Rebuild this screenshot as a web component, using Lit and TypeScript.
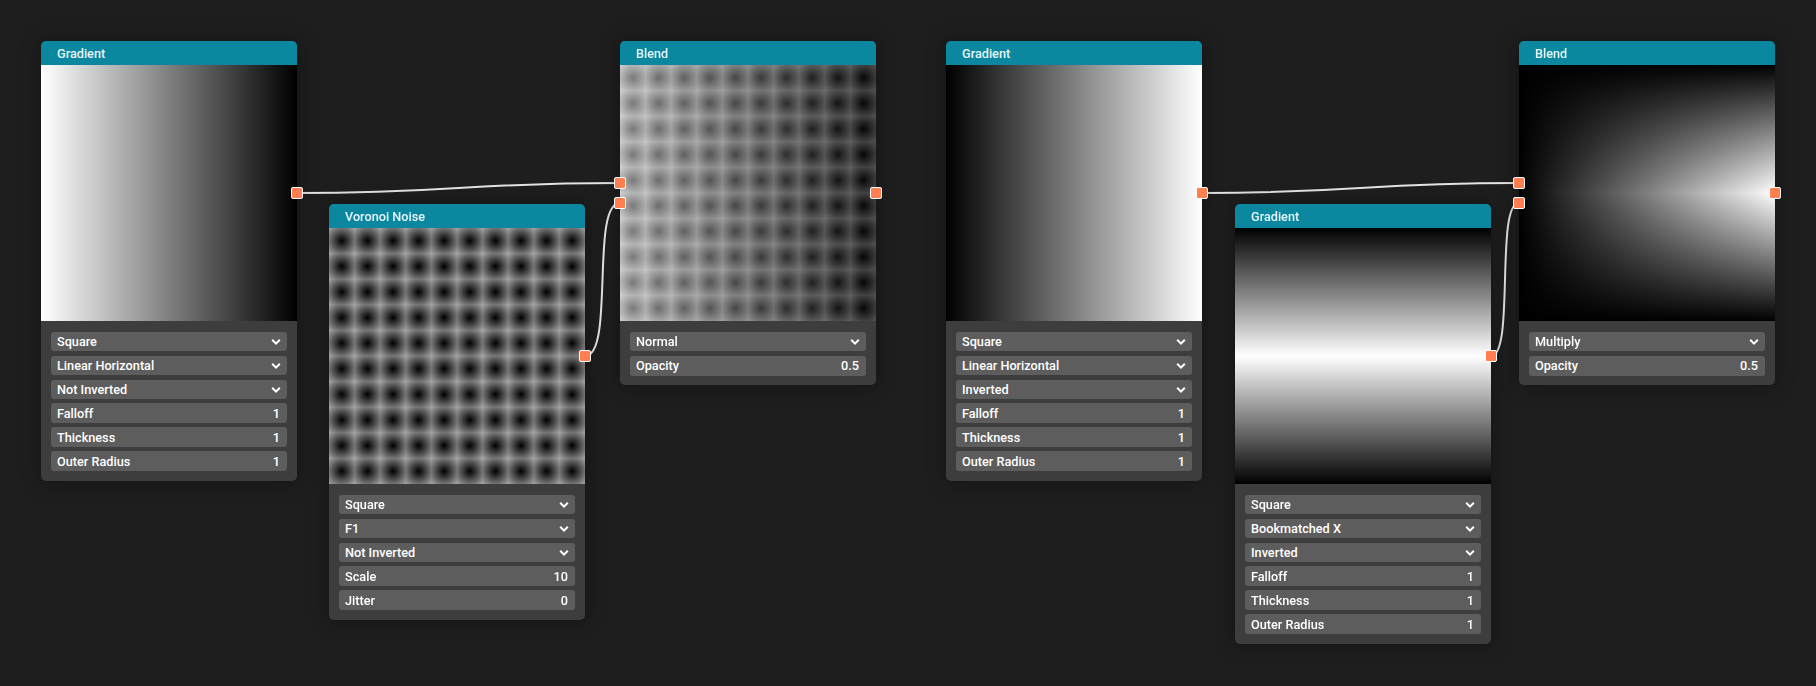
import { LitElement, html, css, svg } from "lit";
import { customElement, property } from "lit/decorators.js";

type Shade = (u: number, v: number) => number;
type Control = { label: string; value?: string };
type NodeData = {
  title: string;
  x: number;
  y: number;
  shade: Shade;
  controls: Control[];
  inputs?: number[];
};

const SIZE = 256;
const gradH: Shade = (u) => 1 - u;
const gradHInv: Shade = (u) => u;
const bookmark: Shade = (_, v) => 1 - Math.abs(2 * v - 1);
const voronoi: Shade = (u, v) => {
  const fx = (u * 10) % 1;
  const fy = (v * 10) % 1;
  const d = Math.hypot(fx - 0.5, fy - 0.5);
  return Math.min(1, d * 0.92);
};
const blendNormal: Shade = (u, v) => gradH(u, v) * 0.5 + voronoi(u, v) * 0.5;
const blendMultiply: Shade = (u, v) => gradHInv(u, v) * bookmark(u, v);

const gradientControls = (mode: string, invert: string): Control[] => [
  { label: "Square" },
  { label: mode },
  { label: invert },
  { label: "Falloff", value: "1" },
  { label: "Thickness", value: "1" },
  { label: "Outer Radius", value: "1" },
];

const NODES: NodeData[] = [
  { title: "Gradient", x: 41, y: 41, shade: gradH, controls: gradientControls("Linear Horizontal", "Not Inverted") },
  {
    title: "Voronoi Noise",
    x: 329,
    y: 204,
    shade: voronoi,
    controls: [
      { label: "Square" },
      { label: "F1" },
      { label: "Not Inverted" },
      { label: "Scale", value: "10" },
      { label: "Jitter", value: "0" },
    ],
  },
  {
    title: "Blend",
    x: 620,
    y: 41,
    shade: blendNormal,
    inputs: [-10, 10],
    controls: [{ label: "Normal" }, { label: "Opacity", value: "0.5" }],
  },
  { title: "Gradient", x: 946, y: 41, shade: gradHInv, controls: gradientControls("Linear Horizontal", "Inverted") },
  { title: "Gradient", x: 1235, y: 204, shade: bookmark, controls: gradientControls("Bookmatched X", "Inverted") },
  {
    title: "Blend",
    x: 1519,
    y: 41,
    shade: blendMultiply,
    inputs: [-10, 10],
    controls: [{ label: "Multiply" }, { label: "Opacity", value: "0.5" }],
  },
];

// x1, y1, x2, y2, horizontal reach of the bezier handles
const WIRES: [number, number, number, number, number][] = [
  [297, 193, 620, 183, 161],
  [585, 356, 620, 203, 30],
  [1202, 193, 1519, 183, 158],
  [1491, 356, 1519, 203, 24],
];

@customElement("graph-node")
class GraphNode extends LitElement {
  @property({ attribute: false }) data!: NodeData;

  static styles = css`
    :host {
      display: flex;
      flex-direction: column;
      width: 256px;
      border-radius: 5px;
      background: #3d3d3d;
      box-shadow: 0 0 20px rgba(0, 0, 0, 0.4);
      font: 500 12.7px Roboto, sans-serif;
      color: #fff;
    }
    .head {
      height: 24px;
      display: flex;
      align-items: center;
      padding-left: 16px;
      background: #0b87a0;
      border-radius: 5px 5px 0 0;
      color: #e6f6fa;
    }
    .view {
      position: relative;
      width: 256px;
      height: 256px;
    }
    canvas {
      display: block;
      width: 256px;
      height: 256px;
    }
    .port {
      position: absolute;
      width: 10px;
      height: 10px;
      box-sizing: content-box;
      margin: -6px;
      border: 1px solid #fff;
      border-radius: 2px;
      background: #ff7f50;
    }
    .output {
      left: 100%;
      top: 50%;
    }
    .input {
      left: 0;
    }
    .controls {
      display: flex;
      flex-direction: column;
      gap: 4px;
      padding: 11px 10px 10px;
    }
    .controls.short {
      padding-bottom: 9px;
    }
    .row {
      box-sizing: border-box;
      height: 20px;
      display: flex;
      align-items: center;
      justify-content: space-between;
      padding: 0 7px 0 6px;
      border-radius: 3px;
      background: #5d5d5d;
    }
    .controls.short .row:not(.select) {
      padding-bottom: 2px;
    }
    .select {
      height: 19px;
      margin-bottom: 1px;
      padding-right: 6px;
    }
    .select:nth-child(3) {
      margin-bottom: 0;
    }
    .select svg {
      display: block;
    }
  `;

  firstUpdated() {
    const canvas = this.renderRoot.querySelector("canvas")!;
    const ctx = canvas.getContext("2d")!;
    const img = ctx.createImageData(SIZE, SIZE);
    for (let y = 0; y < SIZE; y++) {
      for (let x = 0; x < SIZE; x++) {
        const c = Math.round(255 * this.data.shade((x + 0.5) / SIZE, (y + 0.5) / SIZE));
        const i = (y * SIZE + x) * 4;
        img.data[i] = img.data[i + 1] = img.data[i + 2] = c;
        img.data[i + 3] = 255;
      }
    }
    ctx.putImageData(img, 0, 0);
  }

  render() {
    const d = this.data;
    return html`
      <div class="head">${d.title}</div>
      <div class="view">
        <canvas width="256" height="256"></canvas>
        ${(d.inputs ?? []).map(
          (o) => html`<div class="port input" style="top:${128 + o}px"></div>`
        )}
        <div class="port output"></div>
      </div>
      <div class="controls ${d.controls.length === 2 ? "short" : ""}">
        ${d.controls.map((c) =>
          c.value === undefined
            ? html`<div class="row select">
                <span>${c.label}</span>
                <svg width="10" height="8" viewBox="0 0 10 8">
                  <path d="M1.2 1.8 5 5.6 8.8 1.8" fill="none" stroke="#fff" stroke-width="2" />
                </svg>
              </div>`
            : html`<div class="row"><span>${c.label}</span><span>${c.value}</span></div>`
        )}
      </div>
    `;
  }
}

@customElement("app-root")
export class AppRoot extends LitElement {
  static styles = css`
    :host {
      display: block;
    }
    .canvas {
      position: relative;
      width: 1816px;
      height: 686px;
      overflow: hidden;
      background: #1e1e1e;
    }
    graph-node {
      position: absolute;
    }
    .wires {
      position: absolute;
      inset: 0;
    }
    .wires path {
      fill: none;
      stroke: #e4e4e4;
      stroke-width: 2;
    }
  `;

  render() {
    return html`<div class="canvas">
      <svg class="wires" width="1816" height="686">
        ${WIRES.map(
          ([x1, y1, x2, y2, h]) =>
            svg`<path d="M${x1} ${y1} C${x1 + h} ${y1} ${x2 - h} ${y2} ${x2} ${y2}"></path>`
        )}
      </svg>
      ${NODES.map(
        (n) => html`<graph-node .data=${n} style="left:${n.x}px;top:${n.y}px"></graph-node>`
      )}
    </div>`;
  }
}
